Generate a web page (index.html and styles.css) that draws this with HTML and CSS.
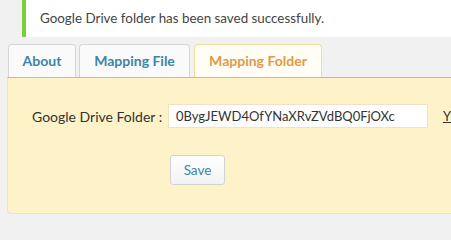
FILE: index.html
```html
<!DOCTYPE html>
<html>
<head>
<meta charset="utf-8">
<link rel="stylesheet" href="styles.css">
</head>
<body>
<div class="notice">Google Drive folder has been saved successfully.</div>
<div class="tabs">
  <div class="tab tab-about">About</div>
  <div class="tab tab-file">Mapping File</div>
  <div class="tab tab-folder active">Mapping Folder</div>
</div>
<div class="panel">
  <div class="row">
    <label class="label">Google Drive Folder :</label>
    <div class="input">0BygJEWD4OfYNaXRvZVdBQ0FjOXc</div>
    <a class="link">Y</a>
  </div>
  <div class="actions">
    <button class="btn">Save</button>
  </div>
</div>
</body>
</html>
```
FILE: styles.css
```css
html, body {
  margin: 0;
  padding: 0;
  background: #f1f1f1;
  font-family: "Lato", "Open Sans", sans-serif;
  color: #333;
  overflow: hidden;
}
.notice {
  margin-left: 22px;
  height: 37px;
  box-sizing: border-box;
  background: #fff;
  border-left: 4px solid #7ad03a;
  padding-left: 14px;
  font-size: 13.4px;
  line-height: 37px;
  color: #444;
}
.tabs {
  display: flex;
  gap: 3px;
  margin-top: 7px;
  padding-left: 8px;
}
.tab {
  height: 33px;
  box-sizing: border-box;
  border: 1px solid #d6d6d6;
  border-bottom: none;
  border-radius: 4px 4px 0 0;
  background: #fafafa;
  color: #3a86a8;
  font-weight: bold;
  font-size: 14px;
  line-height: 32px;
  text-align: center;
}
.tab-about { width: 68px; }
.tab-file { width: 111px; }
.tab-folder { width: 128px; margin-left: 1px; }
.tab.active {
  background: #fffdf4;
  border-color: #f0dc9c;
  color: #df9a4a;
}
.panel {
  margin-left: 7px;
  height: 137px;
  box-sizing: border-box;
  background: #fdf2c8;
  border-top: 1px solid #e1b56a;
  border-left: 1px solid #e2e2e2;
  border-bottom: 1px solid #e2e2e2;
  border-radius: 0 0 0 4px;
  padding: 26px 0 0 24px;
}
.row {
  display: flex;
  align-items: center;
  height: 24px;
}
.label {
  width: 130px;
  font-size: 14px;
  color: #333;
  white-space: nowrap;
}
.input {
  margin-left: 6px;
  width: 262px;
  height: 24px;
  box-sizing: border-box;
  background: #fff;
  border: 1px solid #eee4c4;
  font-size: 13px;
  line-height: 22px;
  padding-left: 7px;
  color: #333;
}
.link {
  margin-left: 15px;
  font-size: 13px;
  color: #333;
  text-decoration: underline;
}
.actions {
  margin-top: 27px;
  padding-left: 138px;
}
.btn {
  width: 55px;
  height: 30px;
  box-sizing: border-box;
  border: 1px solid #d4d4d4;
  border-radius: 3px;
  background: linear-gradient(#ffffff, #f3f3f3);
  color: #3a86a8;
  font-family: "Lato", "Open Sans", sans-serif;
  font-size: 13.5px;
  padding: 0;
}
```
